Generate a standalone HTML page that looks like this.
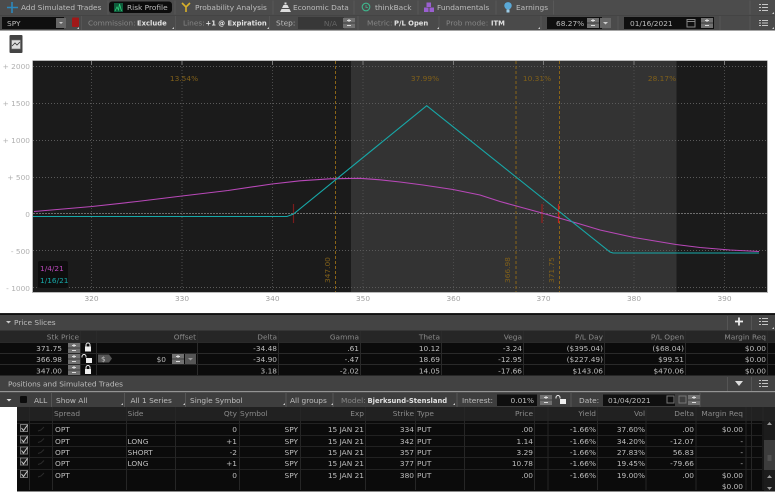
<!DOCTYPE html>
<html><head><meta charset="utf-8"><style>
html,body{margin:0;padding:0;background:#fff;overflow:hidden}
svg{display:block;filter:blur(.3px)}
text{font-family:"DejaVu Sans","Liberation Sans",sans-serif;font-size:7.4px;fill:#bdbdbd}
.b{font-weight:bold;fill:#e2e2e2;font-size:6.8px}
.g{fill:#858585}
.h{fill:#8a8a8a}
.e{text-anchor:end}
.o{fill:#80601a;text-anchor:middle}
.a{fill:#a0a0a0;text-anchor:middle}
.y{fill:#b0b0b0;text-anchor:end}
.w{fill:#bebebe;text-anchor:end}
.lm{fill:#b848b8}
.lc{fill:#17a8a8}
.na{fill:#666;text-anchor:end}
</style></head><body>
<svg width="775" height="492" viewBox="0 0 775 492" xmlns="http://www.w3.org/2000/svg">
<defs><g id="sp"><rect width="12" height="10" fill="#707070"/><path d="M4 2.500h4M6 1v3M4 7.500h4" stroke="#ddd" fill="none"/><path d="M0 5h12" stroke="#3a3a3a"/></g>
<g id="lk"><rect x="0" y="3.500" width="6" height="5" fill="#eee"/><path d="M1 4V2a2 2 0 0 1 4 0v2" stroke="#eee" fill="none"/></g>
<g id="ul"><rect x="2" y="3.500" width="6" height="5" fill="#eee"/><path d="M-2 3V2a2 2 0 0 1 4 0v1" stroke="#eee" fill="none"/></g>
<path id="cb" d="M0 0h7v7H0z" fill="#1a1a1a" stroke="#777"/></defs>
<rect width="775" height="492" fill="#fff"/>
<!-- toolbars -->
<rect width="775" height="15.500" fill="#4c4c4c"/>
<rect y="15.500" width="775" height="15" fill="#4a4a4a"/>
<path d="M0 15.500h775" stroke="#444"/>
<path d="M12 2v11M7 7.500h11" stroke="#2c88bc" stroke-width="1.600" fill="none"/>
<text x="21" y="10">Add Simulated Trades</text>
<rect x="109" y="1.500" width="63" height="11.500" rx="3" fill="#0c0c0c"/>
<rect x="114" y="3" width="9" height="9" fill="#0f5c3c"/>
<path d="M115 11l2-4 1.500 3 1-6 2 7" stroke="#2fd07a" fill="none" stroke-width=".8"/>
<text x="127" y="10">Risk Profile</text>
<path d="M182 3l4 4 4-4M186 7v5" stroke="#d8b02a" stroke-width="1.600" fill="none"/>
<text x="195" y="10">Probability Analysis</text>
<path d="M280 12h11l-1.500-3h-8zM282 8h7l-1.500-3h-4zM284.500 4.500h2V2.500h-2z" fill="#ddd"/>
<text x="293" y="10">Economic Data</text>
<circle cx="366" cy="7" r="3.800" stroke="#3fb58c" stroke-width="1.100" fill="none"/><path d="M366 5v2.500h2" stroke="#3fb58c" fill="none" stroke-width=".8"/>
<text x="375" y="10">thinkBack</text>
<path d="M426.500 2.500h4.500v4.500h-4.500zM424 7.500h4.500v4.500H424zM429.500 7.500h4.500v4.500h-4.500z" fill="#9a5fd0"/>
<text x="437" y="10">Fundamentals</text>
<circle cx="508" cy="5.800" r="3.700" fill="#5aa8d6"/><path d="M506.500 9.500h3v3h-3z" fill="#9ccbe6"/>
<text x="516" y="10">Earnings</text>
<path d="M108 .5v14M175 .5v14M273 .5v14M354 .5v14M418 .5v14M496 .5v14M553.500 .5v14M750 .5v14" stroke="#585858"/>
<path d="M759 4.500h2M762 4.500h6M759 7.500h2M762 7.500h6M759 10.500h2M762 10.500h6M759 20.500h2M762 20.500h6M759 23h2M762 23h6M759 25.500h2M762 25.500h6" stroke="#c8c8c8"/>
<rect x="2" y="17" width="62" height="12" fill="#0f0f0f"/>
<rect x="56" y="18" width="10" height="10" fill="#666"/><path d="M59 22h4l-2 2z" fill="#ccc"/>
<text x="7" y="26">SPY</text>
<rect x="72" y="17.500" width="7" height="9.500" rx="1" fill="#a01818"/>
<path d="M81.500 16v14M175.500 16v14M269.500 16v14M358 16v14M439 16v14M541 16v14M618 16v14M720 16v14M750 16v14" stroke="#555"/>
<text x="88" y="25.500" class="g">Commission:</text><text x="137" y="25.500" class="b">Exclude</text>
<text x="183" y="25.500" class="g">Lines:</text><text x="205.500" y="25.500" class="b">+1 @ Expiration</text>
<text x="276" y="25.500">Step:</text>
<rect x="298" y="17" width="46" height="12" fill="#383838"/>
<text x="337" y="26" class="na">N/A</text>
<use href="#sp" x="343" y="18"/>
<text x="367" y="25.500" class="g">Metric:</text><text x="394" y="25.500" class="b">P/L Open</text>
<text x="446" y="25.500" class="g">Prob mode:</text><text x="491" y="25.500" class="b">ITM</text>
<rect x="547" y="17" width="55" height="12" fill="#0f0f0f"/>
<text x="556" y="26">68.27%</text>
<use href="#sp" x="587" y="18"/><rect x="600" y="18" width="11" height="10" fill="#666"/><path d="M603 22h5l-2.500 2.500z" fill="#ccc"/>
<rect x="624" y="17" width="90" height="12" fill="#0f0f0f"/>
<text x="630" y="26">01/16/2021</text>
<rect x="687" y="19.500" width="8" height="7.500" fill="none" stroke="#888"/><path d="M687 21.500h8" stroke="#888"/>
<use href="#sp" x="701" y="18"/>
<path d="M77 29h2v-2zM172 29h2v-2zM267 29h2v-2zM437 29h2v-2zM538 29h2v-2zM772 14h2v-2zM772 29h2v-2z" fill="#ccc"/>
<!-- chart icon -->
<rect x="9.500" y="35" width="13" height="18" rx="1" fill="#444"/>
<rect x="11.500" y="40" width="9" height="9" fill="#ddd" stroke="#666" stroke-width=".6"/>
<path d="M12 46l3-3 2 2 3-3" stroke="#333" fill="none" stroke-width=".8"/>
<!-- chart -->
<text x="30" y="69" class="y">+ 2000</text><text x="30" y="106" class="y">+ 1500</text><text x="30" y="143" class="y">+ 1000</text><text x="30" y="180" class="y">+ 500</text><text x="30" y="217" class="y">0</text><text x="30" y="254" class="y">- 500</text><text x="30" y="291" class="y">- 1000</text>
<rect x="33" y="61" width="734" height="231" fill="#1b1b1b"/>
<rect x="351" y="61" width="325.500" height="231" fill="#333"/>
<path d="M33 60.500h734M32.500 60.500V292.500h735V60.500" fill="none" stroke="#b8b8b8"/>
<path d="M33 66.500h734M33 103.500h734M33 140.500h734M33 177.500h734M33 250.500h734M33 287.500h734" stroke="#5a5a5a" stroke-dasharray="1 2"/>
<path d="M91.500 61v231M182 61v231M272.500 61v231M363 61v231M453.500 61v231M543.500 61v231M634 61v231M724.500 61v231" stroke="#4c4c4c" stroke-dasharray="1 2"/>
<path d="M33 213.500h734" stroke="#6e6e6e" stroke-dasharray="2 1"/>
<path d="M335.500 61v231M516 61v231M559.500 61v231" stroke="#8a6418" stroke-dasharray="3 2"/>
<path d="M91.500 61v4M182 61v4M272.500 61v4M363 61v4M453.500 61v4M543.500 61v4M634 61v4M724.500 61v4" stroke="#777"/>
<text x="184" y="81" class="o">13.54%</text><text x="425" y="81" class="o">37.99%</text><text x="537" y="81" class="o">10.31%</text><text x="662" y="81" class="o">28.17%</text>
<text transform="translate(330 283) rotate(-90)" class="o" style="text-anchor:start">347.00</text>
<text transform="translate(510 283) rotate(-90)" class="o" style="text-anchor:start">366.98</text>
<text transform="translate(554 283) rotate(-90)" class="o" style="text-anchor:start">371.75</text>
<path d="M293.500 204v19" stroke="#7a1c1c" stroke-width="1.200"/>
<path d="M542 204v19" stroke="#96201c" stroke-width="1.200"/>
<path d="M558.500 204v19" stroke="#c02020" stroke-width="1.200"/>
<path d="M34 211.500L92 206.500 137 201.500 182 196 228 190.500 272 184 300 180.800 330 178.800 360 178.300 380 179.800 400 182 423 185 453 189.500 480 195 500 201.500 520 207 542 213 559 218 580 224 600 230 634 237.500 676 244.500 700 247.500 730 250 759 251.500" fill="none" stroke="#b848b8" stroke-width="1.100"/>
<path d="M33 216.500H287L293.500 214 426.700 105.700 610 252 613 253H759" fill="none" stroke="#17a8a8" stroke-width="1.100"/>
<rect x="38" y="261" width="30" height="27" rx="2" fill="#0e0e0e"/>
<text x="40" y="271" class="lm">1/4/21</text><text x="40" y="283" class="lc">1/16/21</text>
<text x="91.500" y="301" class="a">320</text><text x="182" y="301" class="a">330</text><text x="272.500" y="301" class="a">340</text><text x="363" y="301" class="a">350</text><text x="453.500" y="301" class="a">360</text><text x="543.500" y="301" class="a">370</text><text x="634" y="301" class="a">380</text><text x="724.500" y="301" class="a">390</text>
<!-- price slices -->
<rect y="313" width="775" height="179" fill="#111"/>
<rect y="315" width="775" height="15.500" fill="#444"/>
<path d="M0 313.500h775" stroke="#222"/>
<path d="M6 321l2.500 2.500L11 321z" fill="#ccc"/>
<text x="14" y="325">Price Slices</text>
<path d="M739 317.500v8M735 321.500h8" stroke="#eee" stroke-width="1.800"/>
<path d="M727.500 316v14M751.500 316v14" stroke="#555"/>
<path d="M759 318.500h2M762 318.500h6M759 321.500h2M762 321.500h6M759 324.500h2M762 324.500h6" stroke="#c4c4c4"/>
<path d="M772 329h2v-2z" fill="#ccc"/>
<rect y="330.500" width="775" height="11.500" fill="#262626"/>
<rect y="342" width="775" height="33.500" fill="#0b0b0b"/>
<path d="M0 342.500h775M0 353.500h775M0 364.500h775" stroke="#2a2a2a"/>
<path d="M80.500 331v44M96.500 331v44M197.500 331v44M278.500 331v44M360.500 331v44M441.500 331v44M523.500 331v44M604.500 331v44M685.500 331v44M767.500 331v44" stroke="#2a2a2a"/>
<text x="79" y="339.500" class="e h">Stk Price</text><text x="196" y="339.500" class="e h">Offset</text><text x="277" y="339.500" class="e h">Delta</text><text x="359" y="339.500" class="e h">Gamma</text><text x="440" y="339.500" class="e h">Theta</text><text x="522" y="339.500" class="e h">Vega</text><text x="603" y="339.500" class="e h">P/L Day</text><text x="684" y="339.500" class="e h">P/L Open</text><text x="766" y="339.500" class="e h">Margin Req</text>
<text x="62" y="351" class="w">371.75</text><text x="277" y="351" class="w">-34.48</text><text x="359" y="351" class="w">.61</text><text x="440" y="351" class="w">10.12</text><text x="522" y="351" class="w">-3.24</text><text x="603" y="351" class="w">($395.04)</text><text x="684" y="351" class="w">($68.04)</text><text x="766" y="351" class="w">$0.00</text>
<text x="62" y="362" class="w">366.98</text><text x="166" y="362" class="w">$0</text><text x="277" y="362" class="w">-34.90</text><text x="359" y="362" class="w">-.47</text><text x="440" y="362" class="w">18.69</text><text x="522" y="362" class="w">-12.95</text><text x="603" y="362" class="w">($227.49)</text><text x="684" y="362" class="w">$99.51</text><text x="766" y="362" class="w">$0.00</text>
<text x="62" y="373.500" class="w">347.00</text><text x="277" y="373.500" class="w">3.18</text><text x="359" y="373.500" class="w">-2.02</text><text x="440" y="373.500" class="w">14.05</text><text x="522" y="373.500" class="w">-17.66</text><text x="603" y="373.500" class="w">$143.06</text><text x="684" y="373.500" class="w">$470.06</text><text x="766" y="373.500" class="w">$0.00</text>
<use href="#sp" x="68" y="343"/><use href="#sp" x="68" y="354"/><use href="#sp" x="68" y="365"/>
<use href="#lk" x="85" y="343"/><use href="#ul" x="84" y="354.500"/><use href="#lk" x="85" y="365.500"/>
<path d="M98 354.500h11l3 4-3 4H98z" fill="#555"/><text x="101" y="361.500">$</text>
<use href="#sp" x="172" y="354"/><rect x="185" y="354" width="11" height="10" fill="#555"/><path d="M188 358h5l-2.500 2.500z" fill="#999"/>
<!-- positions -->
<rect y="375.500" width="775" height="16" fill="#424242"/>
<text x="8" y="386.500">Positions and Simulated Trades</text>
<path d="M735 381h8l-4 5z" fill="#ddd"/>
<path d="M727.500 377v14M751.500 377v14" stroke="#555"/>
<path d="M759 380.500h2M762 380.500h6M759 383.500h2M762 383.500h6M759 386.500h2M762 386.500h6" stroke="#c4c4c4"/>
<path d="M0 391.800h775" stroke="#b0b0b0"/>
<rect y="392.500" width="775" height="14.500" fill="#3e3e3e"/>
<path d="M6.500 399l2.500 2.500 2.500-2.500z" fill="#ddd"/>
<rect x="20" y="396" width="7" height="7" rx="1" fill="#0c0c0c"/>
<text x="34" y="403">ALL</text>
<path d="M51.500 393v14M124.500 393v14M185.500 393v14M286 393v14M333 393v14M457 393v14M571 393v14M700 393v14" stroke="#555"/>
<text x="56" y="403">Show All</text><text x="130.500" y="403">All 1 Series</text><text x="190" y="403">Single Symbol</text><text x="290" y="403">All groups</text>
<text x="341" y="403" class="g">Model:</text><text x="367.500" y="403" class="b">Bjerksund-Stensland</text>
<text x="462" y="403">Interest:</text>
<rect x="497" y="394.500" width="40" height="11.500" fill="#0f0f0f"/><text x="534" y="403" class="w">0.01%</text>
<use href="#sp" x="540" y="395"/><use href="#ul" x="558" y="395.500"/>
<text x="579" y="403">Date:</text>
<rect x="603" y="394.500" width="72" height="11.500" fill="#0f0f0f"/><text x="608" y="403">01/04/2021</text>
<rect x="667" y="396" width="7" height="7" fill="none" stroke="#777"/><rect x="679" y="396" width="7" height="7" fill="none" stroke="#777"/>
<use href="#sp" x="688" y="395"/>
<path d="M121 405h2v-2zM183 405h2v-2zM283 405h2v-2zM331 405h2v-2zM453 405h2v-2z" fill="#ccc"/>
<!-- table -->
<rect y="407" width="17" height="85" fill="#fff"/>
<rect x="17" y="407" width="758" height="85" fill="#0b0b0b"/>
<rect x="17" y="407" width="758" height="14" fill="#212121"/>
<path d="M17 423.500h745M17 435.500h745M17 446.500h745M17 457.500h745M17 469.500h745" stroke="#222"/>
<path d="M29.500 407v83M52.500 407v83M126.500 407v83M175.500 407v83M239.500 407v83M300.500 407v83M365.500 407v83M415.500 407v83M464.500 407v83M534.500 407v83M548 407v83M597.500 407v83M646 407v83M696 407v83M746 407v83M751.500 407v83M763 407v83" stroke="#262626"/>
<text x="54" y="416" class="h">Spread</text><text x="127.500" y="416" class="h">Side</text><text x="237" y="416" class="e h">Qty</text><text x="240" y="416" class="h">Symbol</text><text x="364" y="416" class="e h">Exp</text><text x="414" y="416" class="e h">Strike</text><text x="417" y="416" class="h">Type</text><text x="533" y="416" class="e h">Price</text><text x="596" y="416" class="e h">Yield</text><text x="645" y="416" class="e h">Vol</text><text x="694" y="416" class="e h">Delta</text><text x="743" y="416" class="e h">Margin Req</text>
<use href="#cb" x="20.500" y="424.500"/><use href="#cb" x="20.500" y="436"/><use href="#cb" x="20.500" y="447"/><use href="#cb" x="20.500" y="458"/><use href="#cb" x="20.500" y="470.500"/>
<path d="M21.500 428l2 2.500 4-5.500M21.500 439.500l2 2.500 4-5.500M21.500 450.500l2 2.500 4-5.500M21.500 461.500l2 2.500 4-5.500M21.500 474l2 2.500 4-5.500" stroke="#ccc" fill="none"/>
<path d="M38 431l3-1 3-3M38 442.500l3-1 3-3M38 453.500l3-1 3-3M38 464.500l3-1 3-3M38 477l3-1 3-3" stroke="#2c2c2c" fill="none"/>
<text x="55" y="432">OPT</text><text x="237" y="432" class="w">0</text><text x="298" y="432" class="w">SPY</text><text x="364" y="432" class="w">15 JAN 21</text><text x="414" y="432" class="w">334</text><text x="417" y="432">PUT</text><text x="533" y="432" class="w">.00</text><text x="596" y="432" class="w">-1.66%</text><text x="645" y="432" class="w">37.60%</text><text x="694" y="432" class="w">.00</text><text x="743" y="432" class="w">$0.00</text>
<text x="55" y="444">OPT</text><text x="127.500" y="444">LONG</text><text x="237" y="444" class="w">+1</text><text x="298" y="444" class="w">SPY</text><text x="364" y="444" class="w">15 JAN 21</text><text x="414" y="444" class="w">342</text><text x="417" y="444">PUT</text><text x="533" y="444" class="w">1.14</text><text x="596" y="444" class="w">-1.66%</text><text x="645" y="444" class="w">34.20%</text><text x="694" y="444" class="w">-12.07</text><text x="743" y="444" class="w">-</text>
<text x="55" y="455">OPT</text><text x="127.500" y="455">SHORT</text><text x="237" y="455" class="w">-2</text><text x="298" y="455" class="w">SPY</text><text x="364" y="455" class="w">15 JAN 21</text><text x="414" y="455" class="w">357</text><text x="417" y="455">PUT</text><text x="533" y="455" class="w">3.29</text><text x="596" y="455" class="w">-1.66%</text><text x="645" y="455" class="w">27.83%</text><text x="694" y="455" class="w">56.83</text><text x="743" y="455" class="w">-</text>
<text x="55" y="466">OPT</text><text x="127.500" y="466">LONG</text><text x="237" y="466" class="w">+1</text><text x="298" y="466" class="w">SPY</text><text x="364" y="466" class="w">15 JAN 21</text><text x="414" y="466" class="w">377</text><text x="417" y="466">PUT</text><text x="533" y="466" class="w">10.78</text><text x="596" y="466" class="w">-1.66%</text><text x="645" y="466" class="w">19.45%</text><text x="694" y="466" class="w">-79.66</text><text x="743" y="466" class="w">-</text>
<text x="55" y="478">OPT</text><text x="237" y="478" class="w">0</text><text x="298" y="478" class="w">SPY</text><text x="364" y="478" class="w">15 JAN 21</text><text x="414" y="478" class="w">380</text><text x="417" y="478">PUT</text><text x="533" y="478" class="w">.00</text><text x="596" y="478" class="w">-1.66%</text><text x="645" y="478" class="w">19.00%</text><text x="694" y="478" class="w">.00</text><text x="743" y="478" class="w">$0.00</text>
<text x="743" y="489" class="w">$0.00</text>
<rect x="764" y="421" width="11" height="70" fill="#1c1c1c"/>
<rect x="764" y="440" width="11" height="30" fill="#3c3c3c"/>
<path d="M767.500 456h4M767.500 458h4M767.500 460h4" stroke="#666"/>
<path d="M767 425h5l-2.500-3zM767 478h5l-2.500-3zM767 487h5l-2.500 3z" fill="#999"/>
<path d="M17 491.500h758" stroke="#8a8a8a"/>
</svg>
</body></html>
